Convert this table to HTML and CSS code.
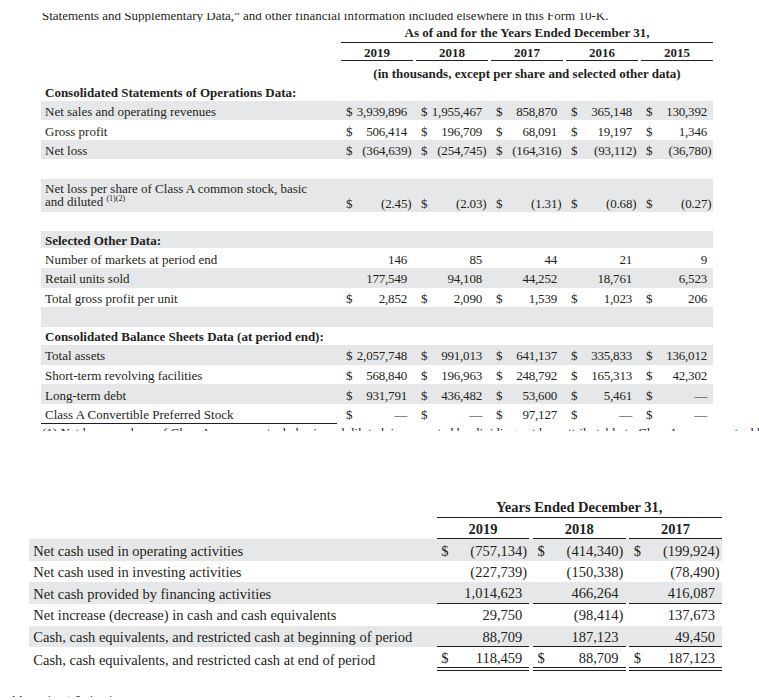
FILE: index.html
```html
<!DOCTYPE html>
<html lang="en">
<head>
<meta charset="utf-8">
<title>Selected Financial Data</title>
<link rel="stylesheet" href="styles.css">
</head>
<body>
<div class="doc">
  <div class="cut cut-top"><p>Statements and Supplementary Data,” and other financial information included elsewhere in this Form 10-K.</p></div>

  <section class="t1">
    <div class="r r-title"><div class="title">As of and for the Years Ended December 31,</div></div>
    <div class="r r-years"><div></div><div class="yr">2019</div><div class="yr">2018</div><div class="yr">2017</div><div class="yr">2016</div><div class="yr">2015</div></div>
    <div class="r r-units"><div class="units">(in thousands, except per share and selected other data)</div></div>
    <div class="r r-head"><div class="lbl b">Consolidated Statements of Operations Data:</div></div>
    <div class="r sh"><div class="lbl">Net sales and operating revenues</div>
      <div class="v"><span>$</span><span class="n">3,939,896</span></div>
      <div class="v"><span>$</span><span class="n">1,955,467</span></div>
      <div class="v"><span>$</span><span class="n">858,870</span></div>
      <div class="v"><span>$</span><span class="n">365,148</span></div>
      <div class="v"><span>$</span><span class="n">130,392</span></div></div>
    <div class="r"><div class="lbl">Gross profit</div>
      <div class="v"><span>$</span><span class="n">506,414</span></div>
      <div class="v"><span>$</span><span class="n">196,709</span></div>
      <div class="v"><span>$</span><span class="n">68,091</span></div>
      <div class="v"><span>$</span><span class="n">19,197</span></div>
      <div class="v"><span>$</span><span class="n">1,346</span></div></div>
    <div class="r sh"><div class="lbl">Net loss</div>
      <div class="v"><span>$</span><span class="n neg">(364,639)</span></div>
      <div class="v"><span>$</span><span class="n neg">(254,745)</span></div>
      <div class="v"><span>$</span><span class="n neg">(164,316)</span></div>
      <div class="v"><span>$</span><span class="n neg">(93,112)</span></div>
      <div class="v"><span>$</span><span class="n neg">(36,780)</span></div></div>
    <div class="r r-sp1"></div>
    <div class="r r-tall sh"><div class="lbl">Net loss per share of Class A common stock, basic<br>and diluted <sup class="fn">(1)(2)</sup></div>
      <div class="v"><span>$</span><span class="n neg">(2.45)</span></div>
      <div class="v"><span>$</span><span class="n neg">(2.03)</span></div>
      <div class="v"><span>$</span><span class="n neg">(1.31)</span></div>
      <div class="v"><span>$</span><span class="n neg">(0.68)</span></div>
      <div class="v"><span>$</span><span class="n neg">(0.27)</span></div></div>
    <div class="r r-sp2"></div>
    <div class="r r-head sh"><div class="lbl b">Selected Other Data:</div></div>
    <div class="r"><div class="lbl">Number of markets at period end</div>
      <div class="v"><span></span><span class="n">146</span></div>
      <div class="v"><span></span><span class="n">85</span></div>
      <div class="v"><span></span><span class="n">44</span></div>
      <div class="v"><span></span><span class="n">21</span></div>
      <div class="v"><span></span><span class="n">9</span></div></div>
    <div class="r sh"><div class="lbl">Retail units sold</div>
      <div class="v"><span></span><span class="n">177,549</span></div>
      <div class="v"><span></span><span class="n">94,108</span></div>
      <div class="v"><span></span><span class="n">44,252</span></div>
      <div class="v"><span></span><span class="n">18,761</span></div>
      <div class="v"><span></span><span class="n">6,523</span></div></div>
    <div class="r"><div class="lbl">Total gross profit per unit</div>
      <div class="v"><span>$</span><span class="n">2,852</span></div>
      <div class="v"><span>$</span><span class="n">2,090</span></div>
      <div class="v"><span>$</span><span class="n">1,539</span></div>
      <div class="v"><span>$</span><span class="n">1,023</span></div>
      <div class="v"><span>$</span><span class="n">206</span></div></div>
    <div class="r sh"></div>
    <div class="r r-head2"><div class="lbl b">Consolidated Balance Sheets Data (at period end):</div></div>
    <div class="r sh"><div class="lbl">Total assets</div>
      <div class="v"><span>$</span><span class="n">2,057,748</span></div>
      <div class="v"><span>$</span><span class="n">991,013</span></div>
      <div class="v"><span>$</span><span class="n">641,137</span></div>
      <div class="v"><span>$</span><span class="n">335,833</span></div>
      <div class="v"><span>$</span><span class="n">136,012</span></div></div>
    <div class="r"><div class="lbl">Short-term revolving facilities</div>
      <div class="v"><span>$</span><span class="n">568,840</span></div>
      <div class="v"><span>$</span><span class="n">196,963</span></div>
      <div class="v"><span>$</span><span class="n">248,792</span></div>
      <div class="v"><span>$</span><span class="n">165,313</span></div>
      <div class="v"><span>$</span><span class="n">42,302</span></div></div>
    <div class="r sh"><div class="lbl">Long-term debt</div>
      <div class="v"><span>$</span><span class="n">931,791</span></div>
      <div class="v"><span>$</span><span class="n">436,482</span></div>
      <div class="v"><span>$</span><span class="n">53,600</span></div>
      <div class="v"><span>$</span><span class="n">5,461</span></div>
      <div class="v"><span>$</span><span class="n">—</span></div></div>
    <div class="r"><div class="lbl ul">Class A Convertible Preferred Stock</div>
      <div class="v"><span>$</span><span class="n">—</span></div>
      <div class="v"><span>$</span><span class="n">—</span></div>
      <div class="v"><span>$</span><span class="n">97,127</span></div>
      <div class="v"><span>$</span><span class="n">—</span></div>
      <div class="v"><span>$</span><span class="n">—</span></div></div>
  </section>

  <div class="cut cut-mid"><p>(1) Net loss per share of Class A common stock, basic and diluted, is computed by dividing net loss attributable to Class A common stockholders by the weighted average shares.</p></div>

  <section class="t2">
    <div class="r2 r2-title"><div class="title2">Years Ended December 31,</div></div>
    <div class="r2 r2-years"><div></div><div class="yr2">2019</div><div class="yr2">2018</div><div class="yr2">2017</div></div>
    <div class="r2 sh"><div class="lbl2">Net cash used in operating activities</div>
      <div class="v2"><span>$</span><span class="n neg">(757,134)</span></div>
      <div class="v2"><span>$</span><span class="n neg">(414,340)</span></div>
      <div class="v2"><span>$</span><span class="n neg">(199,924)</span></div></div>
    <div class="r2"><div class="lbl2">Net cash used in investing activities</div>
      <div class="v2"><span></span><span class="n neg">(227,739)</span></div>
      <div class="v2"><span></span><span class="n neg">(150,338)</span></div>
      <div class="v2"><span></span><span class="n neg">(78,490)</span></div></div>
    <div class="r2 sh"><div class="lbl2">Net cash provided by financing activities</div>
      <div class="v2 ul"><span></span><span class="n">1,014,623</span></div>
      <div class="v2 ul"><span></span><span class="n">466,264</span></div>
      <div class="v2 ul"><span></span><span class="n">416,087</span></div></div>
    <div class="r2"><div class="lbl2">Net increase (decrease) in cash and cash equivalents</div>
      <div class="v2"><span></span><span class="n">29,750</span></div>
      <div class="v2"><span></span><span class="n neg">(98,414)</span></div>
      <div class="v2"><span></span><span class="n">137,673</span></div></div>
    <div class="r2 sh"><div class="lbl2">Cash, cash equivalents, and restricted cash at beginning of period</div>
      <div class="v2 ul"><span></span><span class="n">88,709</span></div>
      <div class="v2 ul"><span></span><span class="n">187,123</span></div>
      <div class="v2 ul"><span></span><span class="n">49,450</span></div></div>
    <div class="r2 r2-last"><div class="lbl2">Cash, cash equivalents, and restricted cash at end of period</div>
      <div class="v2 dl"><span>$</span><span class="n">118,459</span></div>
      <div class="v2 dl"><span>$</span><span class="n">88,709</span></div>
      <div class="v2 dl"><span>$</span><span class="n">187,123</span></div></div>
  </section>

  <div class="cut cut-bot"><p>Operating Activities</p></div>
</div>
</body>
</html>
```

FILE: styles.css
```css
body {
  margin: 0;
  background: #ffffff;
}

.doc {
  font-family: "Liberation Serif", "Times New Roman", serif;
  color: #231f20;
  font-size: 13px;
  line-height: 15px;
}

.cut {
  overflow: hidden;
}

.cut p {
  margin: 0;
  white-space: nowrap;
}

.cut-top {
  margin-top: 13px;
  height: 9px;
  padding-left: 42px;
}

.cut-top p {
  margin-top: -5.4px;
}

.cut-mid {
  margin-top: 4.9px;
  height: 2.6px;
  padding-left: 42px;
}

.cut-mid p {
  margin-top: -3px;
}

.cut-bot {
  margin-top: 25.6px;
  height: 1.4px;
  padding-left: 12px;
  font-size: 14.5px;
}

.cut-bot p {
  margin-top: -3.6px;
}

/* ---------- top table ---------- */
.t1 {
  margin-top: -1px;
  margin-left: 41px;
  width: 672px;
}

.r {
  display: grid;
  grid-template-columns: 300px 75px 75px 75px 75px 72px;
  height: 19.6px;
  align-items: stretch;
}

.sh {
  background: #e6e7e8;
}

.lbl {
  display: flex;
  align-items: center;
  padding-left: 4px;
  padding-top: 2px;
  box-sizing: border-box;
  white-space: nowrap;
}

.b {
  font-weight: bold;
}

.lbl.ul {
  margin-right: 4px;
  border-bottom: 1px solid #231f20;
}

.v {
  display: flex;
  align-items: center;
  width: 72px;
  padding: 2px 6px 0 5px;
  box-sizing: border-box;
  white-space: nowrap;
}

.v .n {
  letter-spacing: -0.2px;
}

.n {
  margin-left: auto;
}

.neg {
  margin-right: -0.333em;
}

.r-title {
  height: 21.5px;
}

.title {
  grid-column: 2 / 7;
  text-align: center;
  font-weight: bold;
  padding-top: 3.5px;
  border-bottom: 1px solid #231f20;
  box-sizing: border-box;
}

.r-years {
  height: 18px;
}

.yr {
  width: 72px;
  text-align: center;
  font-weight: bold;
  padding-top: 2px;
  border-bottom: 1px solid #231f20;
  box-sizing: border-box;
}

.r-units {
  height: 22.4px;
}

.units {
  grid-column: 2 / 7;
  text-align: center;
  font-weight: bold;
  padding-top: 5px;
}

.r-head {
  height: 17.8px;
}

.r-head2 {
  height: 18.3px;
}

.r-sp1 {
  height: 19.8px;
}

.r-sp2 {
  height: 19px;
}

.r-tall {
  height: 32.4px;
}

.r-tall .lbl {
  line-height: 13.5px;
  display: block;
  padding-top: 2.7px;
}

.r-tall .v {
  align-items: flex-end;
  padding-bottom: 1px;
}

.fn {
  font-size: 8px;
  line-height: 0;
  vertical-align: 5px;
}

/* ---------- bottom table ---------- */
.t2 {
  margin-left: 29.3px;
  margin-top: 64.4px;
  width: 692.4px;
  font-size: 14.5px;
  line-height: 17px;
}

.r2 {
  display: grid;
  grid-template-columns: 407.4px 96.3px 96.3px 92.4px;
  height: 21.6px;
  align-items: stretch;
}

.r2-title {
  height: 22.2px;
}

.title2 {
  grid-column: 2 / 5;
  text-align: center;
  font-weight: bold;
  padding-top: 3.5px;
  border-bottom: 1px solid #231f20;
  box-sizing: border-box;
}

.yr2 {
  width: 92.6px;
  text-align: center;
  font-weight: bold;
  padding-top: 3.3px;
  border-bottom: 1px solid #231f20;
  box-sizing: border-box;
}

.lbl2 {
  display: flex;
  align-items: center;
  padding-left: 4px;
  padding-top: 2.4px;
  box-sizing: border-box;
  white-space: nowrap;
}

.v2 {
  display: flex;
  align-items: center;
  width: 92.6px;
  padding: 2.4px 7px 0 4.5px;
  box-sizing: border-box;
  white-space: nowrap;
}

.v2.ul {
  border-bottom: 1px solid #231f20;
}

.r2-last {
  height: 23px;
}

.v2.dl {
  border-bottom: 4px double #231f20;
}
```
